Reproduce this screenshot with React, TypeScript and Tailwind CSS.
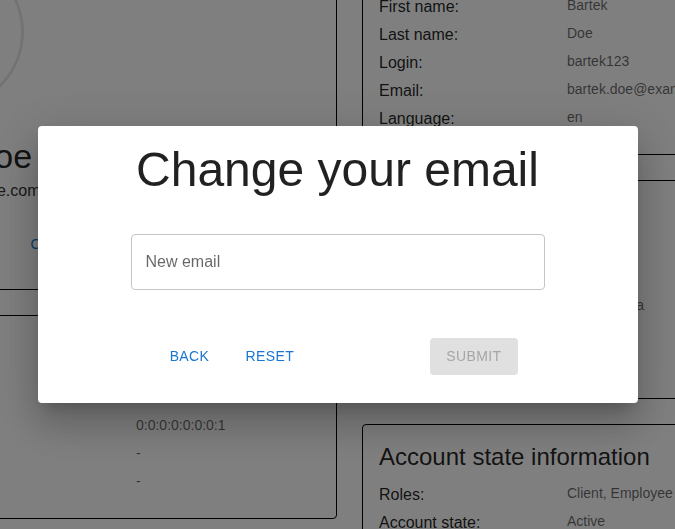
import { ReactNode } from "react";

// ============================================================================
// Profile page (sits behind the dialog)
// ============================================================================

interface Row {
  label: string;
  value: ReactNode;
  tall?: boolean;
}

interface InfoCardProps {
  title: string;
  rows: Row[];
  labelWidth: "narrow" | "wide";
}

function InfoCard({ title, rows, labelWidth }: InfoCardProps) {
  const cols =
    labelWidth === "wide" ? "grid-cols-[339px_1fr]" : "grid-cols-[188px_1fr]";

  return (
    <div className="rounded-[4px] border border-black px-4 pb-[23px] pt-4">
      <h3 className="text-[24px] leading-[32px] text-[rgba(0,0,0,0.87)]">
        {title}
      </h3>
      <div className={`mt-[10px] grid items-start gap-y-1 ${cols}`}>
        {rows.map((row) => (
          <div key={row.label} className="contents">
            <span
              className={`whitespace-nowrap text-[16px] leading-6 text-[rgba(0,0,0,0.87)] ${
                row.tall ? "min-h-[37px]" : ""
              }`}
            >
              {row.label}
            </span>
            <span className="whitespace-nowrap text-[14px] leading-5 text-[rgba(0,0,0,0.6)]">
              {row.value}
            </span>
          </div>
        ))}
      </div>
    </div>
  );
}

function TextButton({ children }: { children: ReactNode }) {
  return (
    <button className="h-[36.5px] min-w-16 rounded-[4px] px-2 text-[14px] uppercase tracking-[0.4px] text-[#1976d2]">
      {children}
    </button>
  );
}

function ProfilePage() {
  return (
    <div className="-ml-[220px] -mt-[64px] flex items-start gap-[25px]">
      {/* Left column */}
      <div className="flex w-[557px] shrink-0 flex-col gap-[25px]">
        <div className="mt-[2px] rounded-[4px] border border-black p-4 pb-[26px]">
          <div className="flex w-[300px] flex-col items-center text-center">
            <div className="h-[154px] w-[154px] rounded-full border-[3px] border-[#e6e6e6]" />
            <h2 className="mt-[26px] whitespace-nowrap text-[34px] leading-[42px] text-[rgba(0,0,0,0.87)]">
              Bartek Doe
            </h2>
            <p className="mt-[2px] whitespace-nowrap text-[16px] leading-6 text-[#333]">
              bartek.doe@example.com
            </p>
          </div>
          <div className="mt-[23px] flex gap-[59px]">
            <TextButton>Change password</TextButton>
            <TextButton>Change email</TextButton>
          </div>
        </div>

        <InfoCard
          title="Login information"
          labelWidth="wide"
          rows={[
            { label: "Last successful login:", value: "2024-05-12 14:22", tall: true },
            { label: "Last successful login IP:", value: "0:0:0:0:0:0:0:1" },
            { label: "Last failed login:", value: "-" },
            { label: "Last failed login IP:", value: "-" },
          ]}
        />
      </div>

      {/* Right column */}
      <div className="flex w-[340px] shrink-0 flex-col gap-[25px]">
        <InfoCard
          title="Personal information"
          labelWidth="narrow"
          rows={[
            { label: "First name:", value: "Bartek" },
            { label: "Last name:", value: "Doe" },
            { label: "Login:", value: "bartek123" },
            { label: "Email:", value: "bartek.doe@example.com" },
            { label: "Language:", value: "en" },
          ]}
        />
        <InfoCard
          title="Address"
          labelWidth="narrow"
          rows={[
            { label: "Country:", value: "Poland" },
            { label: "City:", value: "Warsaw" },
            { label: "Street:", value: "Mazowiecka" },
            { label: "Number:", value: "12" },
            { label: "Postal code:", value: "00-001" },
          ]}
        />
        <InfoCard
          title="Account state information"
          labelWidth="narrow"
          rows={[
            { label: "Roles:", value: "Client, Employee" },
            { label: "Account state:", value: "Active" },
            { label: "Verified:", value: "Yes" },
          ]}
        />
      </div>
    </div>
  );
}

// ============================================================================
// Change email dialog
// ============================================================================

function ChangeEmailDialog() {
  return (
    <div className="fixed inset-0 flex items-center justify-center bg-black/50">
      <div className="flex w-[600px] flex-col items-center rounded-[4px] bg-white pb-[28px] pt-4 shadow-[0px_11px_15px_-7px_rgba(0,0,0,0.2),0px_24px_38px_3px_rgba(0,0,0,0.14),0px_9px_46px_8px_rgba(0,0,0,0.12)]">
        <h2 className="text-[48px] leading-[56px] text-[rgba(0,0,0,0.87)]">
          Change your email
        </h2>

        <input
          type="email"
          placeholder="New email"
          className="mt-[36px] h-[56px] w-[414px] rounded-[4px] border border-[#c4c4c4] px-[14px] text-[16px] text-[rgba(0,0,0,0.87)] outline-none placeholder:text-[rgba(0,0,0,0.6)]"
        />

        <div className="mt-[48px] flex w-[360px] items-center justify-between">
          <div className="flex gap-4">
            <TextButton>Back</TextButton>
            <TextButton>Reset</TextButton>
          </div>
          <button
            disabled
            className="h-[37px] rounded-[4px] bg-[#e0e0e0] px-4 text-[14px] uppercase tracking-[0.4px] text-[#a6a6a6]"
          >
            Submit
          </button>
        </div>
      </div>
    </div>
  );
}

export default function App() {
  return (
    <div className="relative h-[529px] w-[675px] overflow-hidden bg-white font-['Liberation_Sans',Arial,sans-serif]">
      <ProfilePage />
      <ChangeEmailDialog />
    </div>
  );
}
